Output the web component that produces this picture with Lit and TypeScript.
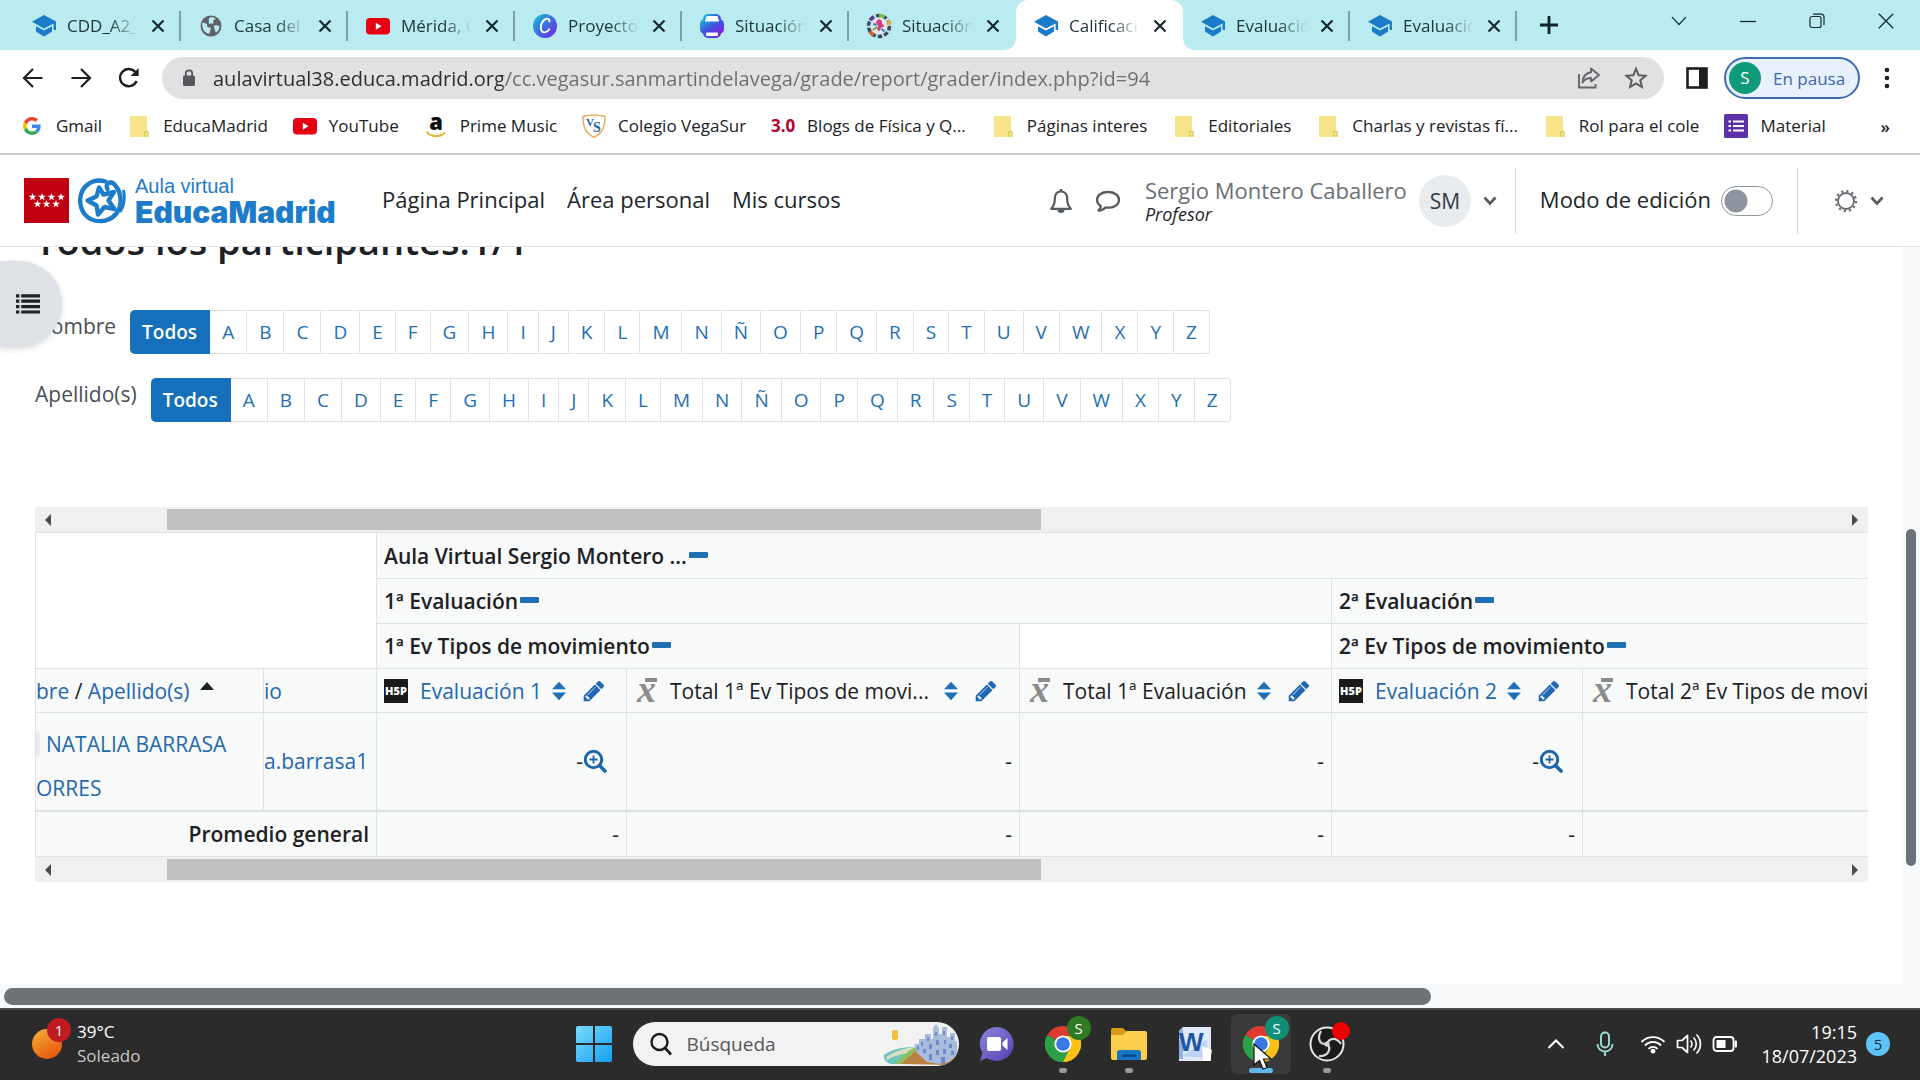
import { LitElement, html, css, svg, nothing } from "lit";
import { customElement } from "lit/decorators.js";
import { classMap } from "lit/directives/class-map.js";

/* ---------- icons ---------- */

const icon = (w: number, h: number, box: string, body: unknown) =>
  html`<svg width=${w} height=${h} viewBox=${box} aria-hidden="true">${body}</svg>`;

const gradCap = icon(24, 24, "0 0 24 24", svg`
  <path d="M12 1 L24 7.5 V16 H21.6 V9.5 L12 14.4 L0 7.8 Z" fill="#1b7bcb"/>
  <path d="M4 12.2 L12 16.6 L20 12.2 V17.6 L12 22.6 L4 17.6 Z" fill="#1b7bcb"/>`);

const globe = icon(24, 24, "0 0 24 24", svg`
  <circle cx="12" cy="12" r="10.5" fill="#5f6368"/>
  <path d="M3.4 8.2c1.6 1 3.4.6 4.4 1.8.8 1-.4 2.2.8 3 1.600 .8 2.600 .2 3.200 1.400.4 1.200-1 2-1 3.400 0 1.400-.8 2.600-2.200 1.800C4.800 17.800 2.600 13.600 3.400 8.200z" fill="#b9ebf1"/>
  <path d="M11 3.400c1.600-.6 4 0 5.400.8-.2 1.600-1.800 1.400-2.200 2.600-.4 1 .6 1.800 0 2.600-1 .8-2-.2-3 .4-1 .4-1.800-.6-1.400-1.600.6-1.200-.4-2 0-3 .2-.8.600-1.600 1.200-1.800z" fill="#b9ebf1"/>
  <path d="M15.600 11.600c1.800-.8 3.200.2 5 .6-.2 2.600-1.400 4.800-3.400 6.400-1.400-.6-.8-2.200-1.400-3.400-.6-1-1.200-2.800-.2-3.600z" fill="#b9ebf1"/>`);

const youtube = icon(24, 24, "0 0 24 24", svg`
  <rect x="0" y="4" width="24" height="16.500" rx="4" fill="#e60012"/>
  <path d="M9.800 8.800 L15.600 12.200 L9.800 15.700 Z" fill="#fff"/>`);

const canva = icon(26, 26, "0 0 26 26", svg`
  <defs><linearGradient id="cv" x1="0" y1="0" x2="1" y2="1">
    <stop offset="0" stop-color="#14c7c9"/><stop offset=".5" stop-color="#3b6fe0"/><stop offset="1" stop-color="#7a1ee0"/>
  </linearGradient></defs>
  <circle cx="13" cy="13" r="12" fill="url(#cv)"/>
  <path d="M17.400 8.600c.6-2.400-1.400-3.400-3.600-2.600-3.200 1.200-5.200 5.200-5 8.800.2 3.200 1.800 4.800 4 4.600 2-.2 3.400-1.600 4.400-3.200" fill="none" stroke="#fff" stroke-width="1.900" stroke-linecap="round"/>`);

const genially = icon(26, 26, "0 0 26 26", svg`
  <defs><linearGradient id="gn" x1="0" y1="0" x2="1" y2="1">
    <stop offset="0" stop-color="#12c4cc"/><stop offset=".5" stop-color="#3f55e0"/><stop offset="1" stop-color="#8a16dc"/>
  </linearGradient></defs>
  <rect x="4" y="1" width="18" height="24" rx="5" fill="url(#gn)"/>
  <rect x="1" y="6" width="24" height="15" rx="5" fill="url(#gn)"/>
  <path d="M7.500 3h11l1.500 5.500h-14z" fill="#fff"/>
  <rect x="7" y="19.500" width="12" height="3.500" rx="1" fill="#fff"/>`);

const wheel = icon(26, 26, "0 0 26 26", svg`
  <circle cx="13" cy="13" r="10.500" fill="none" stroke="#3d4a66" stroke-width="3.500" stroke-dasharray="4.500 2.100"/>
  <g fill="none" stroke-width="3.500">
    <path d="M13 2.500a10.500 10.500 0 0 1 5.500 1.600" stroke="#8bbf3d"/>
    <path d="M21.800 7.200a10.500 10.500 0 0 1 1.600 5" stroke="#e2b23a"/>
    <path d="M4.200 7.200a10.500 10.500 0 0 1 3.400-3.300" stroke="#5b3b8a"/>
    <path d="M4 18.500a10.500 10.500 0 0 0 3.400 3.400" stroke="#d9622b"/>
  </g>
  <circle cx="13" cy="13" r="8" fill="#e9e4f0"/>
  <path d="M12 6.500a3.200 3.200 0 0 1 4 4l2.500 3-3 1-2.500 4-2-2 1-4-2.500-3z" fill="#d0417e"/>
  <path d="M7 10.500l3.500 2M15.500 16l3 2.500" stroke="#2f7fc0" stroke-width="2"/>
  <path d="M7 17l4-3" stroke="#7aa83a" stroke-width="2"/>`);

const closeX = icon(14, 14, "0 0 14 14", svg`<path d="M1.500 1.500 L12.500 12.500 M12.500 1.500 L1.500 12.500" stroke="#14282e" stroke-width="2.200" fill="none"/>`);
const plus = icon(18, 18, "0 0 18 18", svg`<path d="M9 0 V18 M0 9 H18" stroke="#10242a" stroke-width="2.800" fill="none"/>`);
const winChevron = icon(16, 10, "0 0 16 10", svg`<path d="M1 1 L8 8.500 L15 1" fill="none" stroke="#1d3a40" stroke-width="1.200"/>`);
const winMin = icon(16, 10, "0 0 16 10", svg`<path d="M0 5.500 H16" stroke="#14282e" stroke-width="1.300"/>`);
const winRestore = icon(16, 16, "0 0 16 16", svg`
  <rect x="1" y="3.500" width="11" height="11" rx="2" fill="none" stroke="#14282e" stroke-width="1.200"/>
  <path d="M4 1.200 H12 a3 3 0 0 1 3 3 V12" fill="none" stroke="#14282e" stroke-width="1.200"/>`);
const winClose = icon(16, 16, "0 0 16 16", svg`<path d="M.8.8 L15.200 15.200 M15.200.8 L.8 15.200" stroke="#14282e" stroke-width="1.300"/>`);

const back = icon(22, 22, "0 0 22 22", svg`<path d="M20.500 11 H2.500 M11 2 L2 11 L11 20" fill="none" stroke="#1f1f1f" stroke-width="2.200"/>`);
const forward = icon(22, 22, "0 0 22 22", svg`<path d="M1.500 11 H19.500 M11 2 L20 11 L11 20" fill="none" stroke="#1f1f1f" stroke-width="2.200"/>`);
const reload = icon(22, 22, "0 0 22 22", svg`
  <path d="M18.600 14 A8.600 8.600 0 1 1 17.300 5.100" fill="none" stroke="#1f1f1f" stroke-width="2.400"/>
  <path d="M20.600 1 V9 H12.600 Z" fill="#1f1f1f"/>`);
const lock = icon(14, 18, "0 0 14 18", svg`
  <rect x="1" y="6.500" width="12" height="10.500" rx="1.500" fill="#55585c"/>
  <path d="M3.800 7 V4.500 a3.200 3.200 0 0 1 6.400 0 V7" fill="none" stroke="#55585c" stroke-width="1.800"/>`);
const share = icon(24, 24, "0 0 24 24", svg`
  <path d="M2 8 V21.500 H18.500 V18" fill="none" stroke="#64676b" stroke-width="1.900"/>
  <path d="M14 2.500 L22 9 L14 15.500 V12 C10 12 7.500 13.500 5.500 16.500 C6 11 9 6.800 14 6.200 Z" fill="none" stroke="#64676b" stroke-width="1.900" stroke-linejoin="round"/>`);
const star = icon(24, 24, "0 0 24 24", svg`
  <path d="M12 2.800 L14.700 9.200 L21.500 9.800 L16.300 14.300 L17.900 21 L12 17.400 L6.100 21 L7.700 14.300 L2.500 9.800 L9.300 9.200 Z" fill="none" stroke="#5b5e62" stroke-width="2"/>`);
const sidePanel = icon(22, 22, "0 0 22 22", svg`
  <rect x="1.500" y="1.500" width="19" height="19" fill="#fff" stroke="#1f1f1f" stroke-width="2.600"/>
  <rect x="13" y="1" width="8" height="20" fill="#1f1f1f"/>`);
const dots = icon(6, 22, "0 0 6 22", svg`<circle cx="3" cy="3" r="2.300" fill="#1f1f1f"/><circle cx="3" cy="11" r="2.300" fill="#1f1f1f"/><circle cx="3" cy="19" r="2.300" fill="#1f1f1f"/>`);

const google = icon(18, 18, "0 0 48 48", svg`
  <path fill="#EA4335" d="M24 9.500c3.540 0 6.710 1.220 9.210 3.600l6.850-6.850C35.900 2.380 30.470 0 24 0 14.620 0 6.510 5.380 2.560 13.220l7.980 6.190C12.430 13.720 17.740 9.500 24 9.500z"/>
  <path fill="#4285F4" d="M46.980 24.550c0-1.570-.15-3.090-.38-4.550H24v9.020h12.940c-.58 2.960-2.260 5.480-4.780 7.180l7.730 6c4.510-4.180 7.090-10.360 7.090-17.650z"/>
  <path fill="#FBBC05" d="M10.530 28.590c-.48-1.450-.76-2.990-.76-4.590s.27-3.140.76-4.590l-7.980-6.190C.92 16.460 0 20.120 0 24c0 3.880.92 7.540 2.560 10.780l7.970-6.190z"/>
  <path fill="#34A853" d="M24 48c6.480 0 11.930-2.130 15.890-5.810l-7.730-6c-2.150 1.450-4.920 2.300-8.160 2.300-6.260 0-11.570-4.220-13.470-9.910l-7.980 6.190C6.510 42.620 14.620 48 24 48z"/>`);
const folder = icon(20, 22, "0 0 20 22", svg`
  <path d="M1 1 H18 V15 L20 17 V22 H1 Z" fill="#f8e489"/>
  <path d="M15.500 16.500 h3.500 v4.500 h-3.500z" fill="none" stroke="#dcc75c" stroke-width="1"/>`);
const amazon = icon(22, 24, "0 0 22 24", svg`
  <text x="11" y="16" text-anchor="middle" font-family="Open Sans, sans-serif" font-weight="800" font-size="22" fill="#111">a</text>
  <path d="M1.500 18 C7 23.500 15 23.500 20 18.500" fill="none" stroke="#e8b33c" stroke-width="2"/>`);
const shield = icon(24, 24, "0 0 24 24", svg`
  <path d="M1 2.500 C5 1 8 1 12 1 C16 1 19 1 23 2.500 C23 12 21 19 12 23.300 C3 19 1 12 1 2.500 Z" fill="#fff" stroke="#e6b061" stroke-width="1.500"/>
  <text x="4" y="12" font-family="Liberation Serif, serif" font-weight="700" font-size="11" fill="#1d62a8">V</text>
  <text x="11" y="18" font-family="Liberation Serif, serif" font-weight="700" font-size="14" fill="#1d62a8">S</text>`);
const formsIcon = icon(24, 24, "0 0 24 24", svg`
  <rect width="24" height="24" rx="1.500" fill="#5d30a8"/>
  <path d="M9 7.500 H20 M9 12 H20 M9 16.500 H20" stroke="#fff" stroke-width="2.200"/>
  <path d="M4.500 7.500 H7 M4.500 12 H7 M4.500 16.500 H7" stroke="#fff" stroke-width="2.200"/>`);

const star5 = (x: number, y: number) => svg`<path transform="translate(${x} ${y})" d="M0 -3.900 L1 -1.200 L3.900 -1.200 L1.600 .6 L2.400 3.300 L0 1.700 L-2.400 3.300 L-1.600 .6 L-3.900 -1.200 L-1 -1.200 Z" fill="#fff"/>`;
const madridFlag = icon(45, 45, "0 0 45 45", svg`
  <rect width="45" height="45" fill="#be0011"/>
  ${[8.5, 18, 27.5, 37].map((x) => star5(x, 19))}${[13.5, 22.500, 32].map((x) => star5(x, 26))}`);
const educaMark = icon(48, 46, "0 0 48 46", svg`
  <path d="M29.500 11 C26.500 5.500 33 1.800 37 7 C44 15 44.500 28 38 36 C30 45.500 14 45.500 6.500 36 C0 27 1 14 8.500 7.500 C14 2.500 21 1.500 27.500 3.500" fill="none" stroke="#1c7cc9" stroke-width="4.400" stroke-linecap="round"/>
  <path d="M45.500 12 C47 20 46 28 42 34" fill="none" stroke="#1c7cc9" stroke-width="3"/>
  <path d="M21 9.500 L25.500 16.500 L36 14 L30.500 22.500 L36.500 31 L26.500 29 L20 36.500 L18.500 27.500 L9.500 22.500 L18.500 18.500 Z" fill="#fff" stroke="#1c7cc9" stroke-width="4.400" stroke-linejoin="round"/>`);

const bell = icon(24, 26, "0 0 24 26", svg`
  <path d="M12 3.500 C7.500 3.500 5.800 7 5.800 11 C5.800 15 5 18 2.200 20.800 H21.800 C19 18 18.200 15 18.200 11 C18.200 7 16.500 3.500 12 3.500 Z" fill="none" stroke="#565b60" stroke-width="2.200" stroke-linejoin="round"/>
  <path d="M12 1 V4" stroke="#565b60" stroke-width="2.500"/><path d="M8.500 22 H15.500 A3.500 3 0 0 1 8.500 22 Z" fill="#565b60"/>`);
const bubble = icon(26, 24, "0 0 26 24", svg`
  <path d="M13 3 C6.500 3 2 6.300 2 10.800 C2 13.400 3.400 15.500 5.800 17 C5.600 19 4.800 20.300 3.400 21.600 C6.500 21.400 8.800 20.300 10.400 18.500 C18.500 19.500 24 16 24 10.800 C24 6.300 19.500 3 13 3 Z" fill="none" stroke="#565b60" stroke-width="2.300" stroke-linejoin="round"/>`);
const chevron = icon(14, 10, "0 0 14 10", svg`<path d="M1.500 1.500 L7 7.500 L12.500 1.500" fill="none" stroke="#565b60" stroke-width="2.600"/>`);
const gear = icon(24, 24, "0 0 24 24", svg`
  <circle cx="12" cy="12" r="8" fill="none" stroke="#666b70" stroke-width="1.800"/>
  <circle cx="12" cy="12" r="10" fill="none" stroke="#666b70" stroke-width="2.200" stroke-dasharray="2.200 3.036"/>`);

const listIcon = icon(24, 20, "0 0 24 20", svg`
  <path d="M0 1.800 H3.400 M0 7.200 H3.400 M0 12.600 H3.400 M0 18 H3.400 M5.200 1.800 H24 M5.200 7.200 H24 M5.200 12.600 H24 M5.200 18 H24" stroke="#1d2125" stroke-width="3.200"/>`);

const minus = icon(19, 8, "0 0 19 8", svg`<rect width="19" height="6" rx="1" fill="#1f6fb2"/>`);
const sortBoth = icon(14, 20, "0 0 14 20", svg`<path d="M7 .8 L14 8.200 H0 Z M7 19.200 L14 11.600 H0 Z" fill="#1f6fb2"/>`);
const sortUp = icon(14, 8, "0 0 14 8", svg`<path d="M7 0 L14 8 H0 Z" fill="#1d2125"/>`);
const pencil = icon(24, 24, "0 0 1792 1792", svg`
  <path fill="#1f66b4" d="M491 1536l91-91-235-235-91 91v107h128v128h107zm523-928q0-22-22-22-10 0-17 7l-542 542q-7 7-7 17 0 22 22 22 10 0 17-7l542-542q7-7 7-17zm-54-192l416 416-832 832h-416v-416zm683 96q0 53-37 90l-166 166-416-416 166-165q36-38 90-38 53 0 91 38l235 234q37 39 37 91z"/>`);
const zoomIn = icon(24, 24, "0 0 24 24", svg`
  <circle cx="10.500" cy="10.500" r="8.200" fill="none" stroke="#1f66a8" stroke-width="3"/>
  <path d="M10.500 6.500 V14.500 M6.500 10.500 H14.500" stroke="#1f66a8" stroke-width="1.800"/>
  <path d="M16.500 16.500 L22 22" stroke="#1f66a8" stroke-width="3.600" stroke-linecap="round"/>`);
const h5p = icon(24, 24, "0 0 24 24", svg`
  <rect width="24" height="24" fill="#1a1a1a"/>
  <text x="12" y="16" text-anchor="middle" font-family="Open Sans, sans-serif" font-weight="800" font-size="11" fill="#fff">H5P</text>`);
const mean = icon(24, 25, "0 0 24 25", svg`
  <rect x="11" y="0" width="12" height="4" fill="#8b8b8b"/>
  <text x="3" y="24" font-family="Liberation Serif, serif" font-style="italic" font-weight="700" font-size="38" fill="#8b8b8b">x</text>`);
const arrowL = icon(6, 12, "0 0 6 12", svg`<path d="M6 0 V12 L0 6 Z" fill="#4c4c4c"/>`);
const arrowR = icon(6, 12, "0 0 6 12", svg`<path d="M0 0 V12 L6 6 Z" fill="#4c4c4c"/>`);

const sun = icon(32, 32, "0 0 32 32", svg`
  <defs><linearGradient id="sn" x1="0" y1="0" x2=".6" y2="1"><stop offset="0" stop-color="#f6b53a"/><stop offset="1" stop-color="#e8590c"/></linearGradient></defs>
  <circle cx="16" cy="16" r="15" fill="url(#sn)"/>`);
const windows = icon(36, 36, "0 0 36 36", svg`
  <defs><linearGradient id="wn" x1="0" y1="0" x2="1" y2="1"><stop offset="0" stop-color="#79dcfb"/><stop offset="1" stop-color="#159df0"/></linearGradient></defs>
  <path d="M0 2 a2 2 0 0 1 2-2 H17 V17 H0 Z M19 0 H34 a2 2 0 0 1 2 2 V17 H19 Z M0 19 H17 V36 H2 a2 2 0 0 1-2-2 Z M19 19 H36 V34 a2 2 0 0 1-2 2 H19 Z" fill="url(#wn)"/>`);
const magnifier = icon(24, 24, "0 0 24 24", svg`<circle cx="10.500" cy="10" r="8" fill="none" stroke="#1c1c1c" stroke-width="2.400"/><path d="M16 16 L22 22.500" stroke="#1c1c1c" stroke-width="2.600"/>`);
const castle = icon(74, 42, "0 0 74 42", svg`
  <path d="M8 8 a5 5 0 0 1 6 0 V16 a5 5 0 0 1-6 0z" fill="#f0bd3d"/>
  <path d="M0 32 C5 28 15 24 29 24 L37 41 H7 C2 40 -1 36 0 32 Z" fill="#6fc3bd"/>
  <path d="M2 34 C11 28 21 25 31 24 L25 30 C17 31 9 33 3 37 Z" fill="#d9dfc0"/>
  <path d="M11 41 C19 32 25 27 33 23 L31 41 Z" fill="#8fbf62"/>
  <path d="M17 41 L35 25 L59 30 L73 33 C73 38 70 41 66 42 Z" fill="#b9813f"/>
  <path d="M30 21 H35 V16 H41 V11 H47 V16 H49 V5 L52 1 L55 5 V11 H58 V4 H63 V14 H66 V10 H71 V18 H73 V32 L65 39 L55 41 L43 39 L33 30 Z" fill="#a9bbdd"/>
  <path d="M33 23h2v4h-2z M37 19h2v4h-2z M43 14h2v4h-2z M39 26h3v4h-3z M45 21h3v5h-3z M51 9h2v4h-2z M52 17h3v5h-3z M59 8h2v4h-2z M60 17h2v4h-2z M67 13h2v4h-2z M65 21h3v4h-3z M45 31h3v6h-3z M52 27h3v5h-3z M59 26h3v5h-3z M57 34h4v6h-4z M67 28h3v4h-3z" fill="#6f8cc8"/>
  <path d="M64 40 L73 31 C73 36 71 40 67 42 Z" fill="#e9b94e"/>`);
const meet = icon(36, 36, "0 0 36 36", svg`
  <defs><linearGradient id="mt" x1="0" y1="0" x2="1" y2="1"><stop offset="0" stop-color="#8d87dd"/><stop offset="1" stop-color="#5440b0"/></linearGradient></defs>
  <path d="M18 1 A17 17 0 1 1 8 32 L1 35 L3.500 27 A17 17 0 0 1 18 1 Z" fill="url(#mt)"/>
  <rect x="8" y="11" width="14" height="14" rx="2" fill="#fff"/><path d="M23.500 16.500 L28.500 12 V24 L23.500 19.500 Z" fill="#fff"/>`);
const chrome = icon(38, 38, "0 0 38 38", svg`
  <path d="M19 19 L3.400 10 A18 18 0 0 1 34.600 10 Z" fill="#de3a30"/>
  <path d="M19 19 L34.600 10 A18 18 0 0 1 19 37 Z" fill="#fbc116"/>
  <path d="M19 19 L19 37 A18 18 0 0 1 3.400 10 Z" fill="#2aa148"/>
  <path d="M19 11 H35 A18 18 0 0 1 19 37 L26 23 Z" fill="#fbc116"/>
  <path d="M12 23 L3.400 10 A18 18 0 0 0 19 37 L26 23 Z" fill="#2aa148"/>
  <circle cx="19" cy="19" r="8.600" fill="#fff"/><circle cx="19" cy="19" r="6.800" fill="#3b78e7"/>`);
const explorer = icon(38, 34, "0 0 38 34", svg`
  <path d="M1 3 a2 2 0 0 1 2-2 H13 L17 5 H35 a2 2 0 0 1 2 2 V12 H1 Z" fill="#d99a1b"/>
  <path d="M1 8 H13 L17 4 H35 a2 2 0 0 1 2 2 V31 a2 2 0 0 1-2 2 H3 a2 2 0 0 1-2-2 Z" fill="#fbcf4b"/>
  <path d="M7 33 V26 a3 3 0 0 1 3-3 H28 a3 3 0 0 1 3 3 V33 Z" fill="#1675c4"/><rect x="12" y="27.500" width="14" height="2.500" rx="1" fill="#0b4a86"/>`);
const word = icon(36, 36, "0 0 36 36", svg`
  <path d="M6 1 H34 V35 H2 V5 Z" fill="#dfe9f8"/><path d="M2 5 L6 1 V33 H2 Z" fill="#8fb2e3"/>
  <path d="M5 30 L30 14 V32 Z" fill="#bcd2f2"/>
  <text x="2" y="25" font-family="Liberation Sans, sans-serif" font-weight="700" font-size="26" fill="#1f55a5">W</text>
  <path d="M25 20 L35 24 L33 35 H26 Z" fill="#fff"/>`);
const obs = icon(38, 38, "0 0 38 38", svg`
  <circle cx="19" cy="19" r="16.500" fill="#1b1a1c" stroke="#e8e8e8" stroke-width="2"/>
  <g fill="none" stroke="#d8d8d8" stroke-width="2.200">
    <path d="M19 19 C12 20 8.500 14 13 6"/>
    <path d="M19 19 C21.500 12.500 28.500 12 33 19" />
    <path d="M19 19 C24 24 20 31.500 11 31"/>
  </g>
  <circle cx="19" cy="19" r="2.600" fill="#d8d8d8"/>`);
const cursor = icon(20, 28, "0 0 20 28", svg`<path d="M1 1 V22 L6.500 17.500 L10 26 L14 24.500 L10.500 16 H18 Z" fill="#fff" stroke="#111" stroke-width="1.200"/>`);
const caretUp = icon(18, 10, "0 0 18 10", svg`<path d="M1.500 9 L9 1.500 L16.500 9" fill="none" stroke="#fff" stroke-width="2"/>`);
const mic = icon(18, 26, "0 0 18 26", svg`
  <rect x="5" y="1.500" width="8" height="15" rx="4" fill="none" stroke="#9fe0d6" stroke-width="1.900"/>
  <path d="M1.500 13 a7.500 7.500 0 0 0 15 0 M9 20.500 V25" fill="none" stroke="#9fe0d6" stroke-width="1.900"/>`);
const wifi = icon(26, 20, "0 0 26 20", svg`
  <path d="M1.500 8 a16 16 0 0 1 23 0 M5 11.500 a11 11 0 0 1 16 0 M8.500 14.800 a6.200 6.200 0 0 1 9 0" fill="none" stroke="#fff" stroke-width="1.900"/><circle cx="13" cy="17.200" r="2.400" fill="#fff"/>`);
const sound = icon(26, 22, "0 0 26 22", svg`
  <path d="M1.500 7.500 H6 L11.500 2.500 V19.500 L6 14.500 H1.500 Z" fill="none" stroke="#fff" stroke-width="1.700" stroke-linejoin="round"/>
  <path d="M14.500 7.500 a5 5 0 0 1 0 7 M17.500 4.500 a9 9 0 0 1 0 13 M20.500 1.500 a13.500 13.500 0 0 1 0 19" fill="none" stroke="#fff" stroke-width="1.700"/>`);
const battery = icon(26, 18, "0 0 26 18", svg`
  <rect x="1.500" y="2" width="20" height="14" rx="3" fill="none" stroke="#fff" stroke-width="1.800"/>
  <rect x="4.500" y="5" width="9" height="8" fill="#fff"/><path d="M23 6 h1.500 v6 H23z" fill="#fff" stroke="#fff"/>`);

/* ---------- data ---------- */

const tabs = [
  { icon: gradCap, title: "CDD_A2_", active: false, line: true },
  { icon: globe, title: "Casa del", active: false, line: true },
  { icon: youtube, title: "Mérida, C", active: false, line: true },
  { icon: canva, title: "Proyecto", active: false, line: true },
  { icon: genially, title: "Situación", active: false, line: true },
  { icon: wheel, title: "Situación", active: false, line: false },
  { icon: gradCap, title: "Calificaci", active: true, line: false },
  { icon: gradCap, title: "Evaluació", active: false, line: true },
  { icon: gradCap, title: "Evaluació", active: false, line: true },
];

const three = html`<span class="three">3.0</span>`;
const bookmarks = [
  { icon: google, name: "Gmail" },
  { icon: folder, name: "EducaMadrid" },
  { icon: youtube, name: "YouTube" },
  { icon: amazon, name: "Prime Music" },
  { icon: shield, name: "Colegio VegaSur" },
  { icon: three, name: "Blogs de Física y Q..." },
  { icon: folder, name: "Páginas interes" },
  { icon: folder, name: "Editoriales" },
  { icon: folder, name: "Charlas y revistas fí..." },
  { icon: folder, name: "Rol para el cole" },
  { icon: formsIcon, name: "Material" },
];

const letters = [..."ABCDEFGHIJKLMNÑOPQRSTUVWXYZ"];

/* ---------- browser window ---------- */

@customElement("browser-chrome")
export class BrowserChrome extends LitElement {
  static styles = css`
    :host { display: block; font-family: "Open Sans", "Noto Sans", sans-serif; font-size: 17px; color: #202124; background: #fff; }
    svg { display: block; flex: none; }
    button { border: 0; background: none; padding: 0; font: inherit; color: inherit; display: flex; align-items: center; justify-content: center; }
    a { color: inherit; text-decoration: none; }
    .strip { display: flex; height: 50px; background: #baebf0; padding-left: 14px; }
    .tab { flex: 0 1 167px; display: flex; align-items: center; padding: 1px 16px 0 17px; position: relative; box-sizing: border-box; min-width: 0; }
    .fav { width: 26px; display: flex; justify-content: center; flex: none; }
    .title { flex: 1; margin-left: 10px; margin-right: 13px; white-space: nowrap; overflow: hidden; line-height: 24px; color: #1d3439;
      mask-image: linear-gradient(90deg, #000 60%, transparent 100%); }
    .line { border-right: 2px solid #7f9fa6; height: 30px; position: absolute; right: 0; top: 11px; }
    .active { background: #fff; border-radius: 12px 12px 0 0; }
    .active::before, .active::after { content: ""; position: absolute; bottom: 0; width: 10px; height: 10px; }
    .active::before { left: -10px; background: radial-gradient(circle at 0 0, transparent 9px, #fff 10px); }
    .active::after { right: -10px; background: radial-gradient(circle at 100% 0, transparent 9px, #fff 10px); }
    .new { width: 64px; }
    .controls { margin-left: auto; display: flex; height: 42px; }
    .controls button { width: 69px; }
    .toolbar { display: flex; align-items: center; height: 56px; padding: 0 6px 0 9px; }
    .tool { width: 48px; height: 40px; }
    .omni { flex: 1; display: flex; align-items: center; height: 42px; border-radius: 21px; background: #e1e1e1; margin: 0 9px; padding: 0 13px 0 20px; gap: 17px; }
    .url { flex: 1; border: 0; background: linear-gradient(90deg, #2a2b2d 290px, #6b6e72 290px); -webkit-background-clip: text; background-clip: text;
      -webkit-text-fill-color: transparent; color: #5f6368; font: inherit; font-size: 20px; padding: 0; height: 30px; outline: none; min-width: 0; }
    .omni button { width: 30px; }
    .profile { height: 42px; width: 136px; margin-left: 3px; box-sizing: border-box; border: 2px solid #3d6cb3; border-radius: 21px; background: #e8f0fb; color: #3c68ad; justify-content: flex-start; padding: 0 3px; gap: 12px; font-size: 17px; }
    .face { width: 32px; height: 32px; border-radius: 50%; background: #0f9a7a; color: #fff; line-height: 32px; text-align: center; }
    .more { width: 54px; height: 40px; }
    .marks { display: flex; align-items: center; gap: 25px; height: 40px; padding: 0 30px 7px 20px; border-bottom: 2px solid #c9cacb; white-space: nowrap; overflow: hidden; }
    .mark { display: flex; align-items: center; gap: 12px; line-height: 24px; }
    .slot { width: 24px; display: flex; justify-content: center; }
    .three { color: #b8002e; font-weight: 700; font-size: 17px; }
    .over { margin-left: auto; font-weight: 600; }
  `;

  render() {
    return html`
      <div class="strip">
        ${tabs.map((t) => html`
          <div class=${classMap({ tab: true, active: t.active })}>
            <span class="fav">${t.icon}</span><span class="title">${t.title}</span>
            <button aria-label="Cerrar">${closeX}</button>
            ${t.line ? html`<span class="line"></span>` : nothing}
          </div>`)}
        <button class="new" aria-label="Nueva pestaña">${plus}</button>
        <div class="controls">
          <button aria-label="Buscar pestañas">${winChevron}</button>
          <button aria-label="Minimizar">${winMin}</button>
          <button aria-label="Restaurar">${winRestore}</button>
          <button aria-label="Cerrar ventana">${winClose}</button>
        </div>
      </div>
      <div class="toolbar">
        <button class="tool" aria-label="Atrás">${back}</button>
        <button class="tool" aria-label="Adelante">${forward}</button>
        <button class="tool" aria-label="Recargar">${reload}</button>
        <div class="omni">
          ${lock}
          <input class="url" aria-label="Dirección" .value=${"aulavirtual38.educa.madrid.org/cc.vegasur.sanmartindelavega/grade/report/grader/index.php?id=94"} />
          <button aria-label="Compartir">${share}</button>
          <button aria-label="Favorito">${star}</button>
        </div>
        <button class="tool" aria-label="Panel lateral">${sidePanel}</button>
        <button class="profile"><span class="face">S</span>En pausa</button>
        <button class="more" aria-label="Menú">${dots}</button>
      </div>
      <nav class="marks">
        ${bookmarks.map((b) => html`<a class="mark" href="#"><span class="slot">${b.icon}</span>${b.name}</a>`)}
        <button class="over">»</button>
      </nav>
    `;
  }
}

/* ---------- course site ---------- */

@customElement("site-header")
export class SiteHeader extends LitElement {
  static styles = css`
    :host { display: flex; align-items: center; height: 91px; padding: 0 36px 0 24px; border-bottom: 1px solid #dee2e6; background: #fff; font-family: "Open Sans", "Noto Sans", sans-serif; font-size: 22px; color: #212529; white-space: nowrap; }
    svg { display: block; flex: none; }
    a { color: inherit; text-decoration: none; }
    button { border: 0; background: none; padding: 0; font: inherit; color: inherit; display: flex; align-items: center; }
    .brand { display: flex; align-items: center; gap: 9px; width: 312px; }
    .words { display: flex; flex-direction: column; color: #1c7cc9; font-family: "Liberation Sans", Arial, sans-serif; }
    .small { font-size: 20px; line-height: 22px; }
    .big { font-family: Inter, sans-serif; font-weight: 900; font-size: 30px; line-height: 30px; }
    .menu { display: flex; gap: 22px; margin-left: 46px; padding-bottom: 4px; }
    .right { margin-left: auto; display: flex; align-items: center; height: 66px; }
    .tools { display: flex; gap: 22px; margin-right: 24px; }
    .user { gap: 12px; text-align: left; }
    .who { display: flex; flex-direction: column; color: #6a6f74; line-height: 26px; }
    .role { font-size: 18px; font-style: italic; color: #212529; line-height: 22px; }
    .avatar { width: 52px; height: 52px; border-radius: 50%; background: #e9ecef; line-height: 52px; text-align: center; font-size: 21px; color: #343a40; }
    .bar { width: 1px; height: 66px; background: #d5d9dd; }
    .edit { display: flex; align-items: center; gap: 10px; margin: 0 24px; line-height: 30px; }
    .mode { padding-bottom: 4px; }
    .switch { appearance: none; margin: 0; width: 52px; height: 30px; box-sizing: border-box; border: 1px solid #8f959e; border-radius: 15px; background: radial-gradient(circle at 14px 14px, #8f959e 11px, #fff 12px); }
    .bar.first { margin-left: 18px; }
    .cog { gap: 12px; margin-left: 36px; }
  `;

  render() {
    return html`
      <a class="brand" href="#">${madridFlag}${educaMark}<span class="words"><span class="small">Aula virtual</span><span class="big">EducaMadrid</span></span></a>
      <nav class="menu"><a href="#">Página Principal</a><a href="#">Área personal</a><a href="#">Mis cursos</a></nav>
      <div class="right">
        <div class="tools"><button aria-label="Notificaciones">${bell}</button><button aria-label="Mensajes">${bubble}</button></div>
        <button class="user"><span class="who"><span>Sergio Montero Caballero</span><span class="role">Profesor</span></span><span class="avatar">SM</span>${chevron}</button>
        <span class="bar first"></span>
        <label class="edit" for="edit"><span class="mode">Modo de edición</span><input class="switch" id="edit" type="checkbox" role="switch" /></label>
        <span class="bar"></span>
        <button class="cog" aria-label="Ajustes">${gear}${chevron}</button>
      </div>
    `;
  }
}

@customElement("initials-bar")
export class InitialsBar extends LitElement {
  static properties = { label: {} };
  declare label: string;
  static styles = css`
    :host { display: flex; gap: 14px; font-family: "Open Sans", "Noto Sans", sans-serif; font-size: 21px; color: #495057; white-space: nowrap; }
    .label { line-height: 32px; }
    .group { display: flex; font-size: 19px; line-height: 42px; }
    a { color: #1f6fb2; text-decoration: none; padding: 0 12px; border: 1px solid #dee2e6; border-left: 0; background: #fff; }
    a:last-child { border-radius: 0 4px 4px 0; }
    .all { background: #166fba; border-color: #166fba; color: #fff; font-weight: 600; border-radius: 5px 0 0 5px; }
  `;
  render() {
    return html`<span class="label">${this.label}</span>
      <nav class="group" aria-label=${this.label}><a class="all" href="#">Todos</a>${letters.map((l) => html`<a href="#">${l}</a>`)}</nav>`;
  }
}

@customElement("grade-scrollbar")
export class GradeScrollbar extends LitElement {
  static styles = css`
    :host { display: flex; align-items: center; height: 25px; background: #f1f0f0; padding: 0 10px; }
    svg { display: block; }
    .track { flex: 1; display: flex; margin: 0 7px; }
    .before { flex: 109; }
    .thumb { flex: 875; height: 21px; background: #c1c0c0; }
    .after { flex: 805; }
  `;
  render() {
    return html`${arrowL}<div class="track"><span class="before"></span><span class="thumb"></span><span class="after"></span></div>${arrowR}`;
  }
}

@customElement("grader-report")
export class GraderReport extends LitElement {
  static styles = css`
    :host { display: block; font-family: "Open Sans", "Noto Sans", sans-serif; font-size: 21px; color: #1d2125; }
    svg { display: block; flex: none; }
    a { color: #2468ad; text-decoration: none; }
    button { border: 0; background: none; padding: 0; display: flex; }
    .clip { overflow: hidden; }
    table { border-collapse: collapse; table-layout: fixed; width: 1940px; line-height: 32px; white-space: nowrap; }
    .c1 { width: 228px; } .c2 { width: 113px; } .c3 { width: 250px; } .c4 { width: 393px; } .c5 { width: 312px; } .c6 { width: 251px; }
    th, td { border: 1px solid #dee2e6; background: #f8f9f9; padding: 0 7px; text-align: left; font-weight: 400; height: 45px; box-sizing: border-box; }
    .cat th { font-weight: 600; }
    .cat.top th { height: 46px; }
    th.blank, td.blank { background: #fff; }
    .head th { height: 44px; }
    .cell { display: flex; align-items: center; }
    .cat .cell { gap: 2px; }
    .cell svg { margin: 0; }
    .name { margin: 0 10px 0 12px; white-space: pre; }
    .edit { margin-left: 16px; }
    th.cut, td.cut { padding-left: 0; }
    .up { margin: 0 0 10px 10px; }
    .student td, .student th { height: 98px; }
    .student .two { line-height: 44px; vertical-align: bottom; }
    .first { display: flex; align-items: center; gap: 6px; }
    .pic { width: 4px; height: 24px; border-radius: 0 8px 8px 0; background: #e9ecef; }
    .num { text-align: right; }
    .analysis { display: flex; justify-content: flex-end; align-items: center; margin-right: 12px; }
    .avg th, .avg td { border-top: 2px solid #dee2e6; height: 46px; }
    .avg th { text-align: right; font-weight: 600; }
  `;

  private item(kind: unknown, label: string, link: boolean) {
    return html`<div class="cell">${kind}${link ? html`<a class="name" href="#">${label}</a>` : html`<span class="name">${label}</span>`}
      <button aria-label="Ordenar">${sortBoth}</button><button class="edit" aria-label="Editar">${pencil}</button></div>`;
  }

  private category(label: string) {
    return html`<div class="cell">${label}<button aria-label="Contraer">${minus}</button></div>`;
  }

  render() {
    const look = html`<div class="analysis">-<button aria-label="Análisis de calificación">${zoomIn}</button></div>`;
    return html`
      <grade-scrollbar></grade-scrollbar>
      <div class="clip">
        <table>
          <colgroup><col class="c1" /><col class="c2" /><col class="c3" /><col class="c4" /><col class="c5" /><col class="c6" /><col /></colgroup>
          <thead>
            <tr class="cat top"><td class="blank" colspan="2" rowspan="3"></td><th colspan="5">${this.category("Aula Virtual Sergio Montero ...")}</th></tr>
            <tr class="cat"><th colspan="3">${this.category("1ª Evaluación")}</th><th colspan="2">${this.category("2ª Evaluación")}</th></tr>
            <tr class="cat"><th colspan="2">${this.category("1ª Ev Tipos de movimiento")}</th><td class="blank"></td><th colspan="2">${this.category("2ª Ev Tipos de movimiento")}</th></tr>
            <tr class="head">
              <th class="cut"><div class="cell"><span><a href="#">bre</a> / <a href="#">Apellido(s)</a></span><span class="up">${sortUp}</span></div></th>
              <th class="cut"><a href="#">io</a></th>
              <th>${this.item(h5p, "Evaluación 1", true)}</th>
              <th>${this.item(mean, "Total 1ª Ev Tipos de movi... ", false)}</th>
              <th>${this.item(mean, "Total 1ª Evaluación", false)}</th>
              <th>${this.item(h5p, "Evaluación 2", true)}</th>
              <th>${this.item(mean, "Total 2ª Ev Tipos de movi... ", false)}</th>
            </tr>
          </thead>
          <tbody>
            <tr class="student">
              <th class="cut two"><a class="first" href="#"><span class="pic"></span>NATALIA BARRASA</a><a href="#">ORRES</a></th>
              <td class="cut"><a href="#">a.barrasa1</a></td>
              <td>${look}</td><td class="num">-</td><td class="num">-</td><td>${look}</td><td></td>
            </tr>
            <tr class="avg">
              <th colspan="2">Promedio general</th>
              <td class="num">-</td><td class="num">-</td><td class="num">-</td><td class="num">-</td><td></td>
            </tr>
          </tbody>
        </table>
      </div>
      <grade-scrollbar></grade-scrollbar>
    `;
  }
}

@customElement("course-page")
export class CoursePage extends LitElement {
  static styles = css`
    :host { display: flex; flex-direction: column; position: relative; background: #fff; overflow: hidden; font-family: "Open Sans", "Noto Sans", sans-serif; }
    .body { flex: 1; display: flex; }
    .content { flex: 1; min-width: 0; padding: 0 35px; }
    h2 { margin: -30px 0 47px; font-size: 38px; line-height: 46px; font-weight: 600; color: #1d2125; }
    .bars { display: flex; flex-direction: column; gap: 24px; margin-bottom: 85px; }
    .drawer { position: absolute; left: 0; top: 14px; width: 62px; height: 86px; border: 0; border-radius: 0 43px 43px 0; background: #dee2e6; box-shadow: 0 2px 6px #00000026; padding: 0 0 0 16px; display: flex; align-items: center; }
    svg { display: block; }
    .vbar { width: 17px; box-sizing: border-box; background: #f8f9fa; display: flex; flex-direction: column; padding: 0 4px 0 3px; }
    .vtop { flex: 282; }
    .vthumb { flex: 337; background: #6a737b; border-radius: 5px; }
    .vend { flex: 118; }
    .hbar { display: flex; height: 17px; padding: 4px 21px 3px 4px; background: #f8f9fa; }
    .hthumb { flex: 1427; background: #6e7377; border-radius: 9px; }
    .hend { flex: 468; }
  `;

  render() {
    return html`
      <div class="body">
        <main class="content">
          <h2>Todos los participantes:1/1</h2>
          <div class="bars">
            <initials-bar label="Nombre"></initials-bar>
            <initials-bar label="Apellido(s)"></initials-bar>
          </div>
          <grader-report></grader-report>
        </main>
        <div class="vbar"><span class="vtop"></span><span class="vthumb"></span><span class="vend"></span></div>
      </div>
      <div class="hbar"><span class="hthumb"></span><span class="hend"></span></div>
      <button class="drawer" aria-label="Abrir índice del curso">${listIcon}</button>
    `;
  }
}

/* ---------- taskbar ---------- */

@customElement("task-bar")
export class TaskBar extends LitElement {
  static styles = css`
    :host { display: grid; grid-template-columns: 1fr auto 1fr; align-items: center; height: 68px; padding-bottom: 2px; border-top: 2px solid #474b4a; background: #2b2b2b; color: #fff; font-family: "Open Sans", "Noto Sans", sans-serif; font-size: 17px; line-height: 24px; }
    svg { display: block; flex: none; }
    button { border: 0; background: none; padding: 0; color: inherit; font: inherit; display: flex; align-items: center; }
    .weather { padding-left: 31px; gap: 14px; text-align: left; }
    .sun { position: relative; }
    .badge { position: absolute; width: 24px; height: 24px; border-radius: 50%; font-size: 15px; text-align: center; right: -9px; top: -9px; }
    .red { background: #bf1a20; right: -8px; top: -10px; }
    .lines { display: flex; flex-direction: column; }
    .dim { color: #c6c6c6; }
    .center { display: flex; align-items: center; }
    .app { position: relative; width: 60px; height: 60px; justify-content: center; border-radius: 6px; margin-left: 6px; }
    .app.start { margin: 0 9px 0 0; }
    .app.on { background: #3a3a3a; }
    .glyph { position: relative; }
    .mark { position: absolute; bottom: 1px; left: 26px; width: 8px; height: 5px; border-radius: 3px; background: #9a9a9a; }
    .on .mark { left: 18px; width: 24px; background: #5fb8ea; }
    .green { background: #2f7a22; }
    .teal { background: #0f8f78; }
    .rec { width: 18px; height: 18px; background: #ee0000; right: -4px; top: -3px; }
    .cursor { position: absolute; left: 22px; top: 29px; z-index: 1; }
    .search { display: flex; align-items: center; width: 326px; height: 44px; box-sizing: border-box; border-radius: 22px; background: #f2f2f2; padding: 0 1px 0 16px; gap: 14px; margin-right: 2px; overflow: hidden; }
    .field { flex: 1; min-width: 0; border: 0; background: none; outline: none; padding: 0; font: inherit; font-size: 19px; }
    .field::placeholder { color: #55575a; opacity: 1; }
    .tray { display: flex; align-items: center; justify-content: flex-end; padding-right: 30px; }
    .tray .up { margin-right: 31px; }
    .tray .mic { margin-right: 26px; }
    .net { gap: 10px; margin-right: 23px; }
    .clock { flex-direction: column; align-items: flex-end; margin-right: 9px; font-size: 18px; }
    .count { width: 24px; height: 24px; border-radius: 50%; background: #5cc4fa; color: #10303f; justify-content: center; font-size: 15px; }
  `;

  render() {
    return html`
      <button class="weather"><span class="sun">${sun}<span class="badge red">1</span></span><span class="lines"><span>39°C</span><span class="dim">Soleado</span></span></button>
      <div class="center">
        <button class="app start" aria-label="Inicio">${windows}</button>
        <div class="search">${magnifier}<input class="field" aria-label="Búsqueda" placeholder="Búsqueda" />${castle}</div>
        <button class="app" aria-label="Chat">${meet}</button>
        <button class="app" aria-label="Chrome"><span class="glyph">${chrome}<span class="badge green">S</span></span><span class="mark"></span></button>
        <button class="app" aria-label="Explorador">${explorer}<span class="mark"></span></button>
        <button class="app" aria-label="Word">${word}</button>
        <button class="app on" aria-label="Chrome, aula"><span class="glyph">${chrome}<span class="badge teal">S</span></span><span class="mark"></span><span class="cursor">${cursor}</span></button>
        <button class="app" aria-label="OBS"><span class="glyph">${obs}<span class="badge rec"></span></span><span class="mark"></span></button>
      </div>
      <div class="tray">
        <button class="up" aria-label="Iconos ocultos">${caretUp}</button>
        <button class="mic" aria-label="Micrófono">${mic}</button>
        <button class="net" aria-label="Red, volumen y batería">${wifi}${sound}${battery}</button>
        <button class="clock"><span>19:15</span><span>18/07/2023</span></button>
        <button class="count">5</button>
      </div>
    `;
  }
}

@customElement("app-root")
export class AppRoot extends LitElement {
  static styles = css`
    :host { display: flex; flex-direction: column; min-height: 100vh; overflow: hidden; }
    course-page { flex: 1; }
  `;
  render() {
    return html`<browser-chrome></browser-chrome><site-header></site-header><course-page></course-page><task-bar></task-bar>`;
  }
}
